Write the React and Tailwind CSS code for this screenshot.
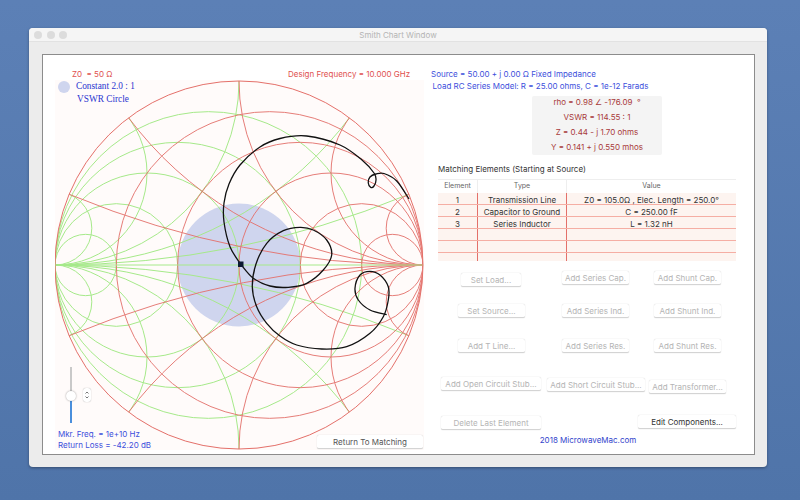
const CX = 239;
const CY = 265;
const R = 184;

const RES = [0.2, 0.5, 1, 2, 5];
const REACT = [0.2, 0.5, 1, 2, 5];

// dir = 1 impedance chart, dir = -1 admittance (mirrored)
const Grid = ({ dir, color, opacity }) => (
  <g fill="none" stroke={color} strokeWidth="1" opacity={opacity} clipPath="url(#unit)">
    {RES.map((r) => {
      const rad = R / (1 + r);
      return <circle key={r} cx={dir * (r / (1 + r)) * R} cy="0" r={rad} />;
    })}
    {REACT.map((x) => (
      <g key={x}>
        <circle cx={dir * R} cy={-R / x} r={R / x} />
        <circle cx={dir * R} cy={R / x} r={R / x} />
      </g>
    ))}
  </g>
);

const upper = [
  [240.7, 264.3], [230, 246.7], [224, 222], [224, 203], [229, 184], [240, 165], [260, 147], [280, 138.5],
  [306.7, 136], [340, 145], [362, 160], [374, 173], [376, 180], [374, 186], [370.7, 187.3], [368.3, 183],
  [370, 177], [376, 174], [384, 173.5], [396.7, 181], [409, 199],
];
const lower = [
  [240.7, 264.3], [253.3, 278.3], [270, 286], [288.3, 287.3], [306.7, 283.3], [323.3, 270], [331.7, 255],
  [326.7, 240], [313.3, 230], [300, 227.3], [283.3, 230.7], [266.7, 243.3], [256, 264], [252.3, 286.7],
  [256.7, 306.7], [266.7, 323.3], [280, 336], [296.7, 345], [321.7, 349], [346.7, 346.7], [370, 333.3],
  [383.3, 316.7], [388.3, 300], [388.3, 286.7], [380, 275], [370, 271.3], [360, 275], [355, 288.3],
  [358.3, 300], [370, 310], [386.7, 314.7],
];

// catmull-rom through the traced points
const smooth = (pts) => {
  let d = `M${pts[0][0]} ${pts[0][1]}`;
  for (let i = 0; i < pts.length - 1; i++) {
    const p0 = pts[i - 1] || pts[i];
    const p1 = pts[i];
    const p2 = pts[i + 1];
    const p3 = pts[i + 2] || p2;
    const c1x = p1[0] + (p2[0] - p0[0]) / 6;
    const c1y = p1[1] + (p2[1] - p0[1]) / 6;
    const c2x = p2[0] - (p3[0] - p1[0]) / 6;
    const c2y = p2[1] - (p3[1] - p1[1]) / 6;
    d += ` C${c1x} ${c1y} ${c2x} ${c2y} ${p2[0]} ${p2[1]}`;
  }
  return d;
};

const SmithChart = () => (
  <svg width="369" height="370" viewBox="55 80 369 370" className="block bg-[#fffbfa]">
    <defs>
      <clipPath id="unit">
        <circle cx="0" cy="0" r={R} />
      </clipPath>
    </defs>
    <circle cx={CX} cy={CY} r="61.5" fill="#cfd5ee" />
    <g transform={`translate(${CX} ${CY})`}>
      <Grid dir={-1} color="#a6e98a" opacity="1" />
      <Grid dir={1} color="#e4706a" opacity="0.9" />
      <line x1={-R} y1="0" x2={R} y2="0" stroke="#a6e98a" strokeWidth="1" />
      <circle cx="0" cy="0" r={R} fill="none" stroke="#e4706a" strokeWidth="1" />
    </g>
    <path d={smooth(upper)} fill="none" stroke="#111" strokeWidth="1.3" />
    <path d={smooth(lower)} fill="none" stroke="#111" strokeWidth="1.3" />
    <rect x="238" y="261.5" width="5.5" height="5.5" fill="#0d1a33" />
  </svg>
);

const Btn = ({ children, className = "", color = "text-[#333]" }) => (
  <div
    className={`h-[14px] flex items-center justify-center rounded-[2px] bg-white border-b border-[#d4d4d4] shadow-[0_0_1px_rgba(0,0,0,0.25)] text-[8px] whitespace-nowrap ${color} ${className}`}
  >
    {children}
  </div>
);

const OFF = "text-[#b4b4b4]";

const rows = [
  ["1", "Transmission Line", "Z0 = 105.0Ω , Elec. Length = 250.0°"],
  ["2", "Capacitor to Ground", "C = 250.00 fF"],
  ["3", "Series Inductor", "L = 1.32 nH"],
  ["", "", ""],
  ["", "", ""],
];

const App = () => (
  <div className="w-[800px] h-[500px] overflow-hidden flex flex-col bg-gradient-to-b from-[#5c80b6] to-[#4f74a9] pt-[28px] pl-[29px] font-['Inter','Liberation_Sans',sans-serif]">
    <div className="w-[738px] h-[439px] flex flex-col rounded-[4px] overflow-hidden bg-[#ececec] shadow-[0_1px_3px_rgba(0,0,0,0.35)]">
      <div className="relative h-[14px] shrink-0 flex items-center justify-center bg-[#f5f5f5] border-b border-[#e2e2e2]">
        <div className="absolute left-[5px] top-[3px] flex gap-[4.5px]">
          <span className="w-[8px] h-[8px] rounded-full bg-[#dcdcdc]" />
          <span className="w-[8px] h-[8px] rounded-full bg-[#dcdcdc]" />
          <span className="w-[8px] h-[8px] rounded-full bg-[#dcdcdc]" />
        </div>
        <span className="text-[8px] text-[#b4b4b4]">Smith Chart Window</span>
      </div>

      <div className="ml-[13px] mt-[12px] w-[713px] h-[401px] flex bg-white border border-[#8c8c8c]">
        {/* Chart side */}
        <div className="relative w-[388px] shrink-0 pl-[12px] pt-[25px]">
          <SmithChart />

          <div className="absolute left-[29px] top-[14px] text-[8px] leading-[11px] text-[#e0514f]">Z0&nbsp; = 50 Ω</div>
          <div className="absolute left-[245px] top-[14px] text-[8px] leading-[11px] text-[#e0514f] whitespace-nowrap">Design Frequency = 10.000 GHz</div>
          <div className="absolute left-[15px] top-[26px] w-[12px] h-[12px] rounded-full bg-[#cfd5ee]" />
          <div className="absolute left-[33px] top-[25px] font-['Liberation_Serif',serif] text-[9.3px] leading-[13px] text-[#2a35d0] whitespace-nowrap">
            <div>Constant 2.0 : 1</div>
            <div className="ml-[1px]">VSWR Circle</div>
          </div>

          {/* Marker slider + stepper */}
          <div className="absolute left-[27px] top-[312px] w-[2px] h-[29px] bg-[#c9c9c9]" />
          <div className="absolute left-[27px] top-[341px] w-[2px] h-[27px] bg-[#4a8fdc]" />
          <div className="absolute left-[23px] top-[336px] w-[10px] h-[10px] rounded-full bg-white shadow-[0_0_2px_rgba(0,0,0,0.4)]" />
          <div className="absolute left-[40px] top-[333px] w-[8px] h-[14px] rounded-[3px] bg-white shadow-[0_0_1px_rgba(0,0,0,0.4)] flex flex-col items-center justify-center">
            <svg width="6" height="10" viewBox="0 0 6 10" fill="none" stroke="#555" strokeWidth="0.8">
              <path d="M1.5 3.5 3 2l1.5 1.5M1.5 6.5 3 8l1.5-1.5" />
            </svg>
          </div>

          <div className="absolute left-[15px] top-[374px] text-[8px] leading-[11px] text-[#3d4fdc] whitespace-nowrap">
            <div>Mkr. Freq. = 1e+10 Hz</div>
            <div>Return Loss = -42.20 dB</div>
          </div>
          <Btn color="text-[#555]" className="absolute left-[274px] top-[380px] w-[106px]">Return To Matching</Btn>
        </div>

        {/* Right side */}
        <div className="flex-1 flex flex-col pt-[13px] text-[8px]">
          <div className="leading-[12px] text-[#3d4fdc] whitespace-nowrap">
            <div>Source = 50.00 + j 0.00 Ω Fixed Impedance</div>
            <div className="ml-[1.5px]">Load RC Series Model: R = 25.00 ohms, C = 1e-12 Farads</div>
          </div>

          <div className="ml-[101px] mt-[4px] w-[130px] h-[59px] pb-[2px] flex flex-col items-center justify-center rounded-[2px] bg-[#f4f4f4] text-[#a83a3a] leading-[15px]">
            <div>rho = 0.98 ∠ -176.09&nbsp; °</div>
            <div>VSWR = 114.55 : 1</div>
            <div>Z = 0.44 - j 1.70 ohms</div>
            <div>Y = 0.141 + j 0.550 mhos</div>
          </div>

          <div className="ml-[7px] mt-[8px] leading-[12px] text-[#333]">Matching Elements (Starting at Source)</div>

          <div className="ml-[7px] mt-[4px] w-[298px]">
            <div className="flex h-[14px] border-t border-[#eeeeee] text-[7px] text-[#666] items-center">
              <div className="w-[40px] text-center border-r border-[#eeeeee] h-full flex items-center justify-center">Element</div>
              <div className="w-[89px] text-center border-r border-[#eeeeee] h-full flex items-center justify-center">Type</div>
              <div className="flex-1 text-center">Value</div>
            </div>
            {rows.map((row, i) => (
              <div key={i} className="flex h-[12px] bg-[#fdf4f0] border-b border-[#f5aea4] text-[#333] leading-[14px]">
                <div className="w-[40px] text-center border-r border-[#e4706a]">{row[0]}</div>
                <div className="w-[89px] text-center border-r border-[#e4706a] whitespace-nowrap">{row[1]}</div>
                <div className="flex-1 text-center whitespace-nowrap">{row[2]}</div>
              </div>
            ))}
            <div className="flex h-[8px] bg-[#fdf4f0]">
              <div className="w-[40px] border-r border-[#e4706a]" />
              <div className="w-[89px] border-r border-[#e4706a]" />
            </div>
          </div>

          <div className="flex mt-[10px]">
            <Btn color={OFF} className="ml-[30px] mt-[2px] w-[60px]">Set Load...</Btn>
            <Btn color={OFF} className="ml-[41px] w-[67px]">Add Series Cap.</Btn>
            <Btn color={OFF} className="ml-[25px] w-[67px]">Add Shunt Cap.</Btn>
          </div>
          <div className="flex mt-[17px]">
            <Btn color={OFF} className="ml-[27px] w-[67px]">Set Source...</Btn>
            <Btn color={OFF} className="ml-[37px] w-[67px]">Add Series Ind.</Btn>
            <Btn color={OFF} className="ml-[25px] w-[67px]">Add Shunt Ind.</Btn>
          </div>
          <div className="flex mt-[21px]">
            <Btn color={OFF} className="ml-[27px] w-[67px]">Add T Line...</Btn>
            <Btn color={OFF} className="ml-[37px] w-[67px]">Add Series Res.</Btn>
            <Btn color={OFF} className="ml-[25px] w-[67px]">Add Shunt Res.</Btn>
          </div>
          <div className="flex mt-[24px]">
            <Btn color={OFF} className="ml-[10px] w-[100px]">Add Open Circuit Stub...</Btn>
            <Btn color={OFF} className="ml-[6px] mt-[1px] w-[98px]">Add Short Circuit Stub...</Btn>
            <Btn color={OFF} className="ml-[4px] mt-[3px] w-[77px]">Add Transformer...</Btn>
          </div>
          <div className="flex mt-[21px]">
            <Btn color={OFF} className="ml-[10px] mt-[1px] w-[100px]">Delete Last Element</Btn>
            <Btn className="ml-[97px] w-[98px]">Edit Components...</Btn>
          </div>
          <div className="ml-[99px] mt-[4px] w-[116px] text-center text-[#3344cc] leading-[12px] whitespace-nowrap">2018 MicrowaveMac.com</div>
        </div>
      </div>
    </div>
  </div>
);

export default App;
